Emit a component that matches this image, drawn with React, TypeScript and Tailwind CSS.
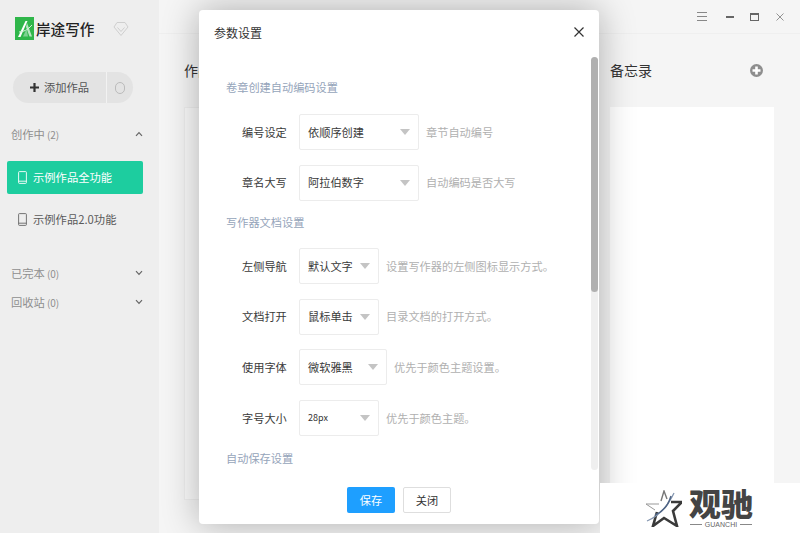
const font = { fontFamily: '"Noto Sans CJK SC", "Liberation Sans", sans-serif' };

function Chevron({ up }: { up?: boolean }) {
  return (
    <svg width="8" height="6" viewBox="0 0 8 6" fill="none" stroke="#666" strokeWidth="1.2">
      <path d={up ? "M1 4.8 L4 1.6 L7 4.8" : "M1 1.2 L4 4.4 L7 1.2"} />
    </svg>
  );
}

function Book({ color }: { color: string }) {
  return (
    <svg width="9" height="13" viewBox="0 0 9 13" fill="none" stroke={color} strokeWidth="0.9">
      <rect x="0.6" y="0.6" width="7.8" height="11.8" rx="0.8" />
      <path d="M0.6 10.2 H8.4" />
    </svg>
  );
}

function Group({ label, count, up, className }: { label: string; count: string; up?: boolean; className: string }) {
  return (
    <div className={`flex h-[20px] items-center justify-between pl-[11px] pr-[16px] text-[11.3px] text-[#8e8e8e] ${className}`}>
      <span>
        {label}
        <span className="ml-[2px] text-[10px]">({count})</span>
      </span>
      <Chevron up={up} />
    </div>
  );
}

function Row({ label, value, hint, w, small }: { label: string; value: string; hint: string; w: string; small?: boolean }) {
  return (
    <div className="mb-[14.6px] flex h-[36px] items-center">
      <div className="w-[43px] shrink-0 whitespace-nowrap text-[11.2px] text-[#3a3a3a]">{label}</div>
      <div className={`ml-[14px] flex h-[36px] shrink-0 items-center justify-between rounded-[2px] border border-[#ececec] bg-white pl-[8px] pr-[7px] ${w}`}>
        <span className={small ? "text-[9px] text-[#333]" : "text-[11.2px] text-[#3a3a3a]"}>{value}</span>
        <span className="mr-[1px] h-0 w-0 border-x-[5px] border-t-[6px] border-x-transparent border-t-[#c4c4c4]" />
      </div>
      <div className="ml-[7px] whitespace-nowrap text-[11.2px] text-[#b0b0b0]">{hint}</div>
    </div>
  );
}

function Section({ children, className }: { children: string; className: string }) {
  return <div className={`h-[16px] text-[11.2px] leading-[16px] text-[#95a4ba] ${className}`}>{children}</div>;
}

export default function App() {
  return (
    <div className="relative flex h-[533px] w-[800px] overflow-hidden bg-[#f5f5f5]" style={font}>
      <aside className="flex w-[159px] shrink-0 flex-col bg-[#eeeeee]">
        <div className="mt-[17px] flex h-[23px] items-center pl-[15px]">
          <svg width="19" height="23" viewBox="0 0 19 23">
            <rect width="19" height="23" fill="#2fb64a" />
            <path d="M3 20 L10.5 4 L12.5 4 L5.5 20 Z" fill="#fff" />
            <path d="M11 10 L14.5 19.5 L17 19.5 L12 6 Z" fill="#b9e6c3" />
            <path d="M4 15 Q11 15 17 8" fill="none" stroke="#d4f0da" strokeWidth="1" />
            <path d="M8 19.5 L11.5 12 L13 19.5 Z" fill="#7fd193" />
          </svg>
          <span className="ml-[2px] whitespace-nowrap text-[14.6px] font-medium text-[#222]">岸途写作</span>
          <svg className="ml-[19px]" width="16" height="16" viewBox="0 0 16 16" fill="none" stroke="#cfcfcf" strokeWidth="1">
            <path d="M4 1.5 H12 L15 6 L8 14.5 L1 6 Z" />
            <path d="M4.5 6.5 L8 10.5 L11.5 6.5" />
          </svg>
        </div>
        <div className="ml-[13px] mt-[32px] flex h-[31px] w-[120px] items-center rounded-full bg-[#e3e3e3]">
          <div className="flex w-[94px] items-center justify-center border-r border-[#f2f2f2] text-[11.3px] leading-[31px] text-[#555]">
            <svg width="9" height="9" viewBox="0 0 9 9" fill="#333">
              <path d="M3.4 0 H5.6 V3.4 H9 V5.6 H5.6 V9 H3.4 V5.6 H0 V3.4 H3.4 Z" />
            </svg>
            <span className="ml-[5px]">添加作品</span>
          </div>
          <div className="flex flex-1 justify-center">
            <span className="h-[12px] w-[10px] rounded-full border-[1.5px] border-[#bbb]" />
          </div>
        </div>
        <Group label="创作中" count="2" up className="mt-[21px]" />
        <div className="ml-[7px] mt-[17px] flex h-[33px] w-[136px] items-center rounded-[2px] bg-[#1dcd9f] pl-[11px] text-[11.3px] text-white">
          <Book color="#ffffff" />
          <span className="ml-[6px]">示例作品全功能</span>
        </div>
        <div className="ml-[7px] mt-[9px] flex h-[33px] w-[136px] items-center pl-[11px] text-[11.3px] text-[#5a5a5a]">
          <Book color="#666666" />
          <span className="ml-[6px]">示例作品2.0功能</span>
        </div>
        <Group label="已完本" count="0" className="mt-[27px]" />
        <Group label="回收站" count="0" className="mt-[9px]" />
      </aside>

      <main className="flex flex-1 flex-col">
        <div className="flex h-[34px] shrink-0 items-center justify-end border-b border-[#efefef] pr-[16px]">
          <svg width="10" height="9" viewBox="0 0 10 9" stroke="#888" strokeWidth="1">
            <path d="M0 0.5 H10 M0 4.5 H10 M0 8.5 H10" />
          </svg>
          <span className="ml-[19px] h-[2px] w-[8px] bg-[#666]" />
          <span className="ml-[16px] h-[8px] w-[9px] border border-t-2 border-[#666]" />
          <svg className="ml-[17px]" width="8" height="8" viewBox="0 0 8 8" stroke="#888" strokeWidth="0.9">
            <path d="M0.5 0.5 L7.5 7.5 M7.5 0.5 L0.5 7.5" />
          </svg>
        </div>
        <div className="flex flex-1 pb-[33px] pl-[25px] pr-[26px]">
          <div className="flex flex-1 flex-col">
            <div className="flex h-[73px] shrink-0 items-center text-[14px] text-[#333]">作品</div>
            <div className="flex-1 border border-[#eeeeee] bg-[#fafafa]" />
          </div>
          <div className="ml-[20px] flex w-[164px] shrink-0 flex-col">
            <div className="flex h-[73px] shrink-0 items-center justify-between pr-[11px] text-[14px] text-[#333]">
              备忘录
              <svg width="13" height="13" viewBox="0 0 13 13">
                <circle cx="6.5" cy="6.5" r="6.5" fill="#8e8e8e" />
                <path d="M5.2 2.5 H7.8 V5.2 H10.5 V7.8 H7.8 V10.5 H5.2 V7.8 H2.5 V5.2 H5.2 Z" fill="#fff" />
              </svg>
            </div>
            <div className="flex-1 bg-white" />
          </div>
        </div>
      </main>

      <div className="absolute left-[199px] top-[10px] flex h-[514px] w-[400px] flex-col rounded-[4px] bg-white shadow-[0_0_36px_rgba(0,0,0,0.3)]">
        <div className="flex h-[47px] shrink-0 items-start justify-between pl-[15px] pr-[15px] pt-[15px]">
          <span className="text-[12px] leading-[16px] text-[#333]">参数设置</span>
          <svg className="mt-[2px]" width="10" height="10" viewBox="0 0 10 10" stroke="#333" strokeWidth="1.2">
            <path d="M0.5 0.5 L9.5 9.5 M9.5 0.5 L0.5 9.5" />
          </svg>
        </div>
        <div className="flex h-[413px] shrink-0">
          <div className="flex-1 overflow-hidden pl-[27px] pt-[22px]">
            <Section className="mb-[19px]">卷章创建自动编码设置</Section>
            <div className="pl-[16px]">
              <Row label="编号设定" value="依顺序创建" hint="章节自动编号" w="w-[120px]" />
              <Row label="章名大写" value="阿拉伯数字" hint="自动编码是否大写" w="w-[120px]" />
            </div>
            <Section className="-mt-[1px] mb-[18px]">写作器文档设置</Section>
            <div className="pl-[16px]">
              <Row label="左侧导航" value="默认文字" hint="设置写作器的左侧图标显示方式。" w="w-[80px]" />
              <Row label="文档打开" value="鼠标单击" hint="目录文档的打开方式。" w="w-[80px]" />
              <Row label="使用字体" value="微软雅黑" hint="优先于颜色主题设置。" w="w-[88px]" />
              <Row label="字号大小" value="28px" hint="优先于颜色主题。" w="w-[80px]" small />
            </div>
            <Section className="-mt-[1px]">自动保存设置</Section>
          </div>
          <div className="mr-[1px] h-full w-[7px] shrink-0 rounded-full bg-[#efefef]">
            <div className="h-[235px] w-full rounded-full bg-[#b0b0b0]" />
          </div>
        </div>
        <div className="flex flex-1 items-start justify-center gap-[8px] pt-[17px]">
          <button className="h-[26px] w-[48px] rounded-[2px] bg-[#1e9fff] text-[11.2px] text-white">保存</button>
          <button className="h-[26px] w-[48px] rounded-[2px] border border-[#dedede] bg-white text-[11.2px] text-[#333]">关闭</button>
        </div>
      </div>

      <div className="absolute bottom-0 right-0 flex h-[50px] w-[200px] items-start bg-white pl-[46px] pt-[5px]">
        <svg className="mt-[2px]" width="36" height="37" viewBox="0 0 36 37">
          <path d="M15 11 L18 1 L21 9" fill="none" stroke="#777" strokeWidth="1.4" />
          <path d="M25 12 L36 12 L27 21 L31 36 L18 28 L7 36 L11 22" fill="none" stroke="#3a3a3a" strokeWidth="2.6" />
          <path d="M0 14 H13 M0 14 L9 20" fill="none" stroke="#999" strokeWidth="1" />
          <path d="M1 31 Q18 24 28 3" fill="none" stroke="#8496b0" strokeWidth="1.3" />
          <path d="M9 25 Q21 20 25 6" fill="none" stroke="#4f6484" strokeWidth="1.5" />
        </svg>
        <div className="ml-[6px] flex w-[66px] flex-col items-center">
          <span className="h-[32px] whitespace-nowrap text-[32px] font-black leading-[28px] text-[#444]">观驰</span>
          <div className="flex items-center gap-[3px]">
            <span className="h-px w-[12px] bg-[#888]" />
            <span className="text-[7px] leading-[9px] text-[#666]" style={{ fontFamily: '"Liberation Sans", sans-serif' }}>GUANCHI</span>
            <span className="h-px w-[12px] bg-[#888]" />
          </div>
        </div>
      </div>
    </div>
  );
}
